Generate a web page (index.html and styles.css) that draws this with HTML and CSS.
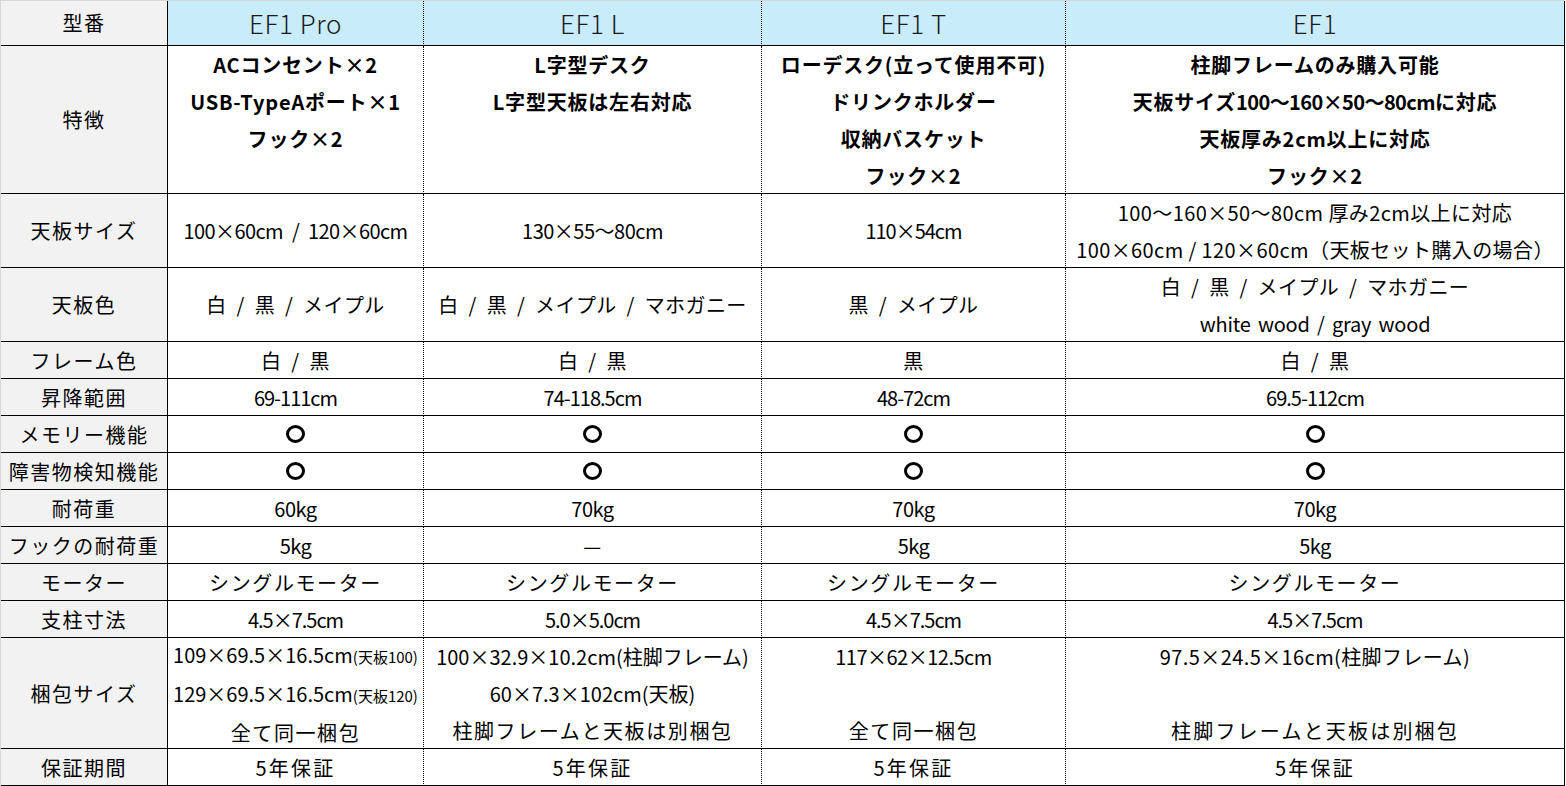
FILE: index.html
```html
<!DOCTYPE html>
<html lang="ja">
<head>
<meta charset="utf-8">
<title>EF1 比較表</title>
<link rel="stylesheet" href="styles.css">
</head>
<body>
<div class="sheet">
  <div class="c lab hd">型番</div>
  <div class="c hd model">EF1 Pro</div>
  <div class="c hd model">EF1 L</div>
  <div class="c hd model">EF1 T</div>
  <div class="c hd model last">EF1</div>

  <div class="c lab">特徴</div>
  <div class="c top b"><div>ACコンセント×2<br>USB-TypeAポート×1<br>フック×2</div></div>
  <div class="c top b"><div>L字型デスク<br>L字型天板は左右対応</div></div>
  <div class="c top b"><div>ローデスク(立って使用不可)<br>ドリンクホルダー<br>収納バスケット<br>フック×2</div></div>
  <div class="c top b last"><div>柱脚フレームのみ購入可能<br>天板サイズ<span class="n">100～160×50～80cm</span>に対応<br>天板厚み2cm以上に対応<br>フック×2</div></div>

  <div class="c lab">天板サイズ</div>
  <div class="c nm sl"><div>100×60cm / 120×60cm</div></div>
  <div class="c nh"><div>130×55～80cm</div></div>
  <div class="c n"><div>110×54cm</div></div>
  <div class="c last"><div>100～160×50～80cm 厚み2cm以上に対応<br>100×60cm / 120×60cm（天板セット購入の場合）</div></div>

  <div class="c lab">天板色</div>
  <div class="c sl"><div>白 / 黒 / メイプル</div></div>
  <div class="c sl"><div>白 / 黒 / メイプル / マホガニー</div></div>
  <div class="c sl"><div>黒 / メイプル</div></div>
  <div class="c sl last"><div>白 / 黒 / メイプル / マホガニー<br><span class="ww">white wood / gray wood</span></div></div>

  <div class="c lab">フレーム色</div>
  <div class="c sl"><div>白 / 黒</div></div>
  <div class="c sl"><div>白 / 黒</div></div>
  <div class="c sl"><div>黒</div></div>
  <div class="c sl last"><div>白 / 黒</div></div>

  <div class="c lab">昇降範囲</div>
  <div class="c n"><div>69-111cm</div></div>
  <div class="c n"><div>74-118.5cm</div></div>
  <div class="c n"><div>48-72cm</div></div>
  <div class="c n last"><div>69.5-112cm</div></div>

  <div class="c lab">メモリー機能</div>
  <div class="c"><span class="ok"></span></div>
  <div class="c"><span class="ok"></span></div>
  <div class="c"><span class="ok"></span></div>
  <div class="c last"><span class="ok"></span></div>

  <div class="c lab">障害物検知機能</div>
  <div class="c"><span class="ok"></span></div>
  <div class="c"><span class="ok"></span></div>
  <div class="c"><span class="ok"></span></div>
  <div class="c last"><span class="ok"></span></div>

  <div class="c lab">耐荷重</div>
  <div class="c nh"><div>60kg</div></div>
  <div class="c nh"><div>70kg</div></div>
  <div class="c nh"><div>70kg</div></div>
  <div class="c nh last"><div>70kg</div></div>

  <div class="c lab">フックの耐荷重</div>
  <div class="c nh"><div>5kg</div></div>
  <div class="c"><div>—</div></div>
  <div class="c nh"><div>5kg</div></div>
  <div class="c nh last"><div>5kg</div></div>

  <div class="c lab">モーター</div>
  <div class="c j"><div>シングルモーター</div></div>
  <div class="c j"><div>シングルモーター</div></div>
  <div class="c j"><div>シングルモーター</div></div>
  <div class="c j last"><div>シングルモーター</div></div>

  <div class="c lab">支柱寸法</div>
  <div class="c n"><div>4.5×7.5cm</div></div>
  <div class="c n"><div>5.0×5.0cm</div></div>
  <div class="c n"><div>4.5×7.5cm</div></div>
  <div class="c n last"><div>4.5×7.5cm</div></div>

  <div class="c lab">梱包サイズ</div>
  <div class="c tight"><div>109×69.5×16.5cm<span class="sm">(天板100)</span><br>129×69.5×16.5cm<span class="sm">(天板120)</span><br><span class="j">全て同一梱包</span></div></div>
  <div class="c tight"><div>100×32.9×10.2cm(柱脚フレーム)<br>60×7.3×102cm(天板)<br><span class="j">柱脚フレームと天板は別梱包</span></div></div>
  <div class="c"><div><span class="nh">117×62×12.5cm</span><br>&nbsp;<br><span class="j">全て同一梱包</span></div></div>
  <div class="c last"><div>97.5×24.5×16cm(柱脚フレーム)<br>&nbsp;<br><span class="j2">柱脚フレームと天板は別梱包</span></div></div>

  <div class="c lab">保証期間</div>
  <div class="c w"><div>5年保証</div></div>
  <div class="c w"><div>5年保証</div></div>
  <div class="c w"><div>5年保証</div></div>
  <div class="c w last"><div>5年保証</div></div>
</div>
</body>
</html>
```

FILE: styles.css
```css
html, body {
  margin: 0;
  padding: 0;
  background: #ffffff;
}

body {
  font-family: "Noto Sans CJK JP", "Noto Sans", sans-serif;
  font-size: 20px;
  color: #000000;
}

.sheet {
  display: grid;
  width: 1565px;
  box-sizing: border-box;
  grid-template-columns: 167px 256px 338px 304px 499px;
  grid-template-rows: 45px 148px 74px 74px 37px 37px 37px 37px 37px 37px 37px 37px 111px 37px;
  border-top: 1px solid #d6d6d6;
  border-left: 1px solid #d6d6d6;
}

.c {
  box-sizing: border-box;
  border-bottom: 1px solid #000000;
  border-right: 1px dotted #000000;
  display: flex;
  flex-direction: column;
  justify-content: center;
  align-items: center;
  text-align: center;
  line-height: 37px;
  white-space: nowrap;
  letter-spacing: 0.4px;
}

.lab {
  background: #f2f2f2;
  border-right: 1px solid #000000;
  letter-spacing: 1.5px;
}

.last {
  border-right: 1px solid #000000;
}

.hd {
  line-height: 44px;
}

.model {
  background: #c9ecfa;
  font-size: 26px;
  font-weight: 300;
  color: #1a1a1a;
  letter-spacing: 0.6px;
}

.top {
  justify-content: flex-start;
}

.b {
  font-weight: 700;
  letter-spacing: 0.8px;
}

.b .n {
  letter-spacing: -0.6px;
}

.n {
  letter-spacing: -1px;
}

.nm {
  letter-spacing: -0.6px;
}

.nh {
  letter-spacing: -0.5px;
}

.j {
  letter-spacing: 1.6px;
}

.j2 {
  letter-spacing: 2.2px;
}

.w {
  letter-spacing: 2.2px;
}

.sl {
  word-spacing: 5px;
}

.ww {
  word-spacing: 3px;
  letter-spacing: -0.2px;
}

.tight {
  letter-spacing: 0;
}

.sm {
  font-size: 15px;
  letter-spacing: 0;
}

.ok {
  display: inline-block;
  box-sizing: border-box;
  width: 19px;
  height: 18px;
  border: 3px solid #000000;
  border-radius: 50%;
}
```
